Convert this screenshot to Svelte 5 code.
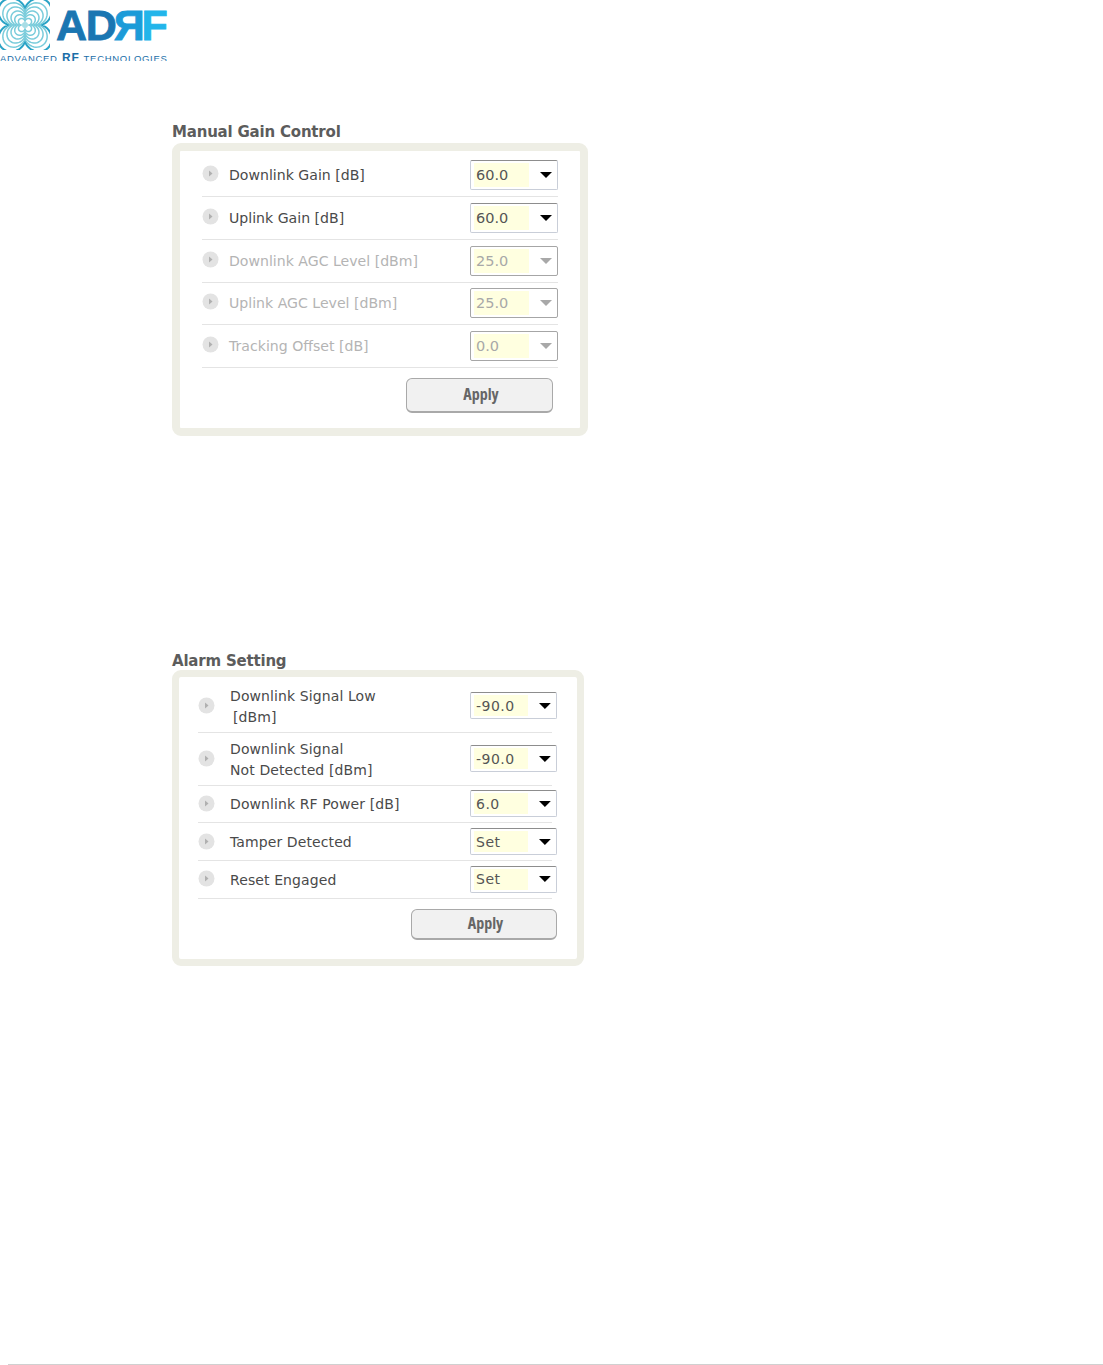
<script>
  const gainRows = [
    { label: 'Downlink Gain [dB]', value: '60.0' },
    { label: 'Uplink Gain [dB]', value: '60.0' },
    { label: 'Downlink AGC Level [dBm]', value: '25.0', disabled: true },
    { label: 'Uplink AGC Level [dBm]', value: '25.0', disabled: true },
    { label: 'Tracking Offset [dB]', value: '0.0', disabled: true }
  ];

  const alarmRows = [
    { lines: ['Downlink Signal Low', '[dBm]'], value: '-90.0', tall: true, indent: true },
    { lines: ['Downlink Signal', 'Not Detected [dBm]'], value: '-90.0', tall: true },
    { lines: ['Downlink RF Power [dB]'], value: '6.0' },
    { lines: ['Tamper Detected'], value: 'Set' },
    { lines: ['Reset Engaged'], value: 'Set' }
  ];

  // four-lobed rings of the logo mark
  function ring(size) {
    const points = [];
    for (let i = 0; i < 96; i++) {
      const t = (i / 96) * Math.PI * 2;
      const r = size * (0.5 + 0.5 * Math.pow(Math.abs(Math.sin(2 * t)), 0.8));
      points.push(`${(25 + r * Math.cos(t)).toFixed(2)},${(25 + r * Math.sin(t)).toFixed(2)}`);
    }
    return points.join(' ');
  }

  const rings = [32.5, 27, 22, 17, 12.5, 8];
</script>

{#snippet bullet()}
  <svg class="bullet" width="17" height="17" viewBox="0 0 17 17" aria-hidden="true">
    <circle cx="8.5" cy="8.5" r="8" fill="#e3e3e3" />
    <path d="M7 5.5 L10.5 8.5 L7 11.5 Z" fill="#b0b0b0" />
  </svg>
{/snippet}

{#snippet select(value, disabled)}
  <div class="select" class:disabled>
    <span class="value">{value}</span>
    <svg class="arrow" width="12" height="6" viewBox="0 0 12 6" aria-hidden="true">
      <path d="M0 0 H12 L6 6 Z" />
    </svg>
  </div>
{/snippet}

<div class="page">
  <header class="logo">
    <svg class="mark" width="50" height="50" viewBox="0 0 50 50" aria-hidden="true">
      {#each rings as size, i}
        <polygon
          points={ring(size)}
          fill="none"
          stroke={i === 0 ? '#2aa3c6' : '#7accdb'}
          stroke-width={i === 0 ? 2 : 1.5}
        />
      {/each}
      <circle cx="25" cy="25" r="3" fill="#a9dde6" />
    </svg>
    <div class="wordmark">
      <span class="ad">AD</span><span class="r">R</span><span class="f">F</span>
    </div>
    <div class="tagline">ADVANCED <b>RF</b> TECHNOLOGIES</div>
  </header>

  <section class="gain">
    <h2>Manual Gain Control</h2>
    <div class="panel">
      {#each gainRows as row}
        <div class="row" class:disabled={row.disabled}>
          {@render bullet()}
          <span class="label">{row.label}</span>
          {@render select(row.value, row.disabled)}
        </div>
      {/each}
      <div class="actions">
        <button class="apply">Apply</button>
      </div>
    </div>
  </section>

  <section class="alarm">
    <h2>Alarm Setting</h2>
    <div class="panel">
      {#each alarmRows as row}
        <div class="row" class:tall={row.tall}>
          {@render bullet()}
          <span class="label">
            {#each row.lines as line, i}
              <span class="line" class:indent={row.indent && i === 1}>{line}</span>
            {/each}
          </span>
          {@render select(row.value, false)}
        </div>
      {/each}
      <div class="actions">
        <button class="apply">Apply</button>
      </div>
    </div>
  </section>

  <footer class="rule"></footer>
</div>

<style>
  :global(body) {
    margin: 0;
    background: #fff;
  }

  .page {
    position: relative;
    height: 1365px;
    overflow: hidden;
    font-family: "DejaVu Sans", Verdana, sans-serif;
    color: #4a4a4a;
  }

  .logo {
    position: relative;
    height: 61px;
    width: 170px;
    overflow: hidden;
  }

  .mark {
    display: block;
  }

  .wordmark {
    position: absolute;
    left: 56px;
    top: 0;
    font-family: "Liberation Sans", Arial, sans-serif;
    font-weight: 700;
    font-size: 43px;
    line-height: 50px;
    letter-spacing: -1.2px;
    white-space: nowrap;
    -webkit-text-stroke: 0.8px currentColor;
  }

  .ad {
    color: #1a76b2;
  }

  .r {
    display: inline-block;
    transform: scaleX(-1);
    color: #1c9bd8;
    margin-left: -1px;
  }

  .f {
    color: #22b5ea;
    margin-left: -3px;
  }

  .tagline {
    position: absolute;
    left: 0;
    top: 52px;
    width: 170px;
    font-family: "Liberation Sans", Arial, sans-serif;
    font-size: 9.5px;
    line-height: 12px;
    letter-spacing: 0.7px;
    color: #1a6ea8;
    white-space: nowrap;
  }

  .tagline b {
    font-size: 12px;
    line-height: 12px;
    margin: 0 1px;
  }

  section {
    margin-left: 172px;
  }

  .gain {
    width: 416px;
    margin-top: 60px;
  }

  .alarm {
    width: 412px;
    margin-top: 214px;
  }

  h2 {
    margin: 0;
    height: 22px;
    font-size: 15px;
    line-height: 22px;
    font-weight: 700;
    color: #5c5c5c;
    white-space: nowrap;
    letter-spacing: -0.2px;
  }

  .panel {
    box-sizing: border-box;
    background: #fff;
    border: 8px solid #eeeee5;
    border-radius: 9px;
  }

  .gain .panel {
    height: 293px;
    padding: 3.25px 22px 0;
  }

  .alarm .panel {
    height: 296px;
    padding: 3px 25px 0 19px;
    border-width: 7px;
    margin-top: -2px;
  }

  .row {
    display: flex;
    align-items: center;
    box-sizing: border-box;
    height: 42.75px;
    border-bottom: 1px solid #e4e4e4;
    font-size: 14.1px;
  }

  .alarm .row {
    height: 37.75px;
    font-size: 14px;
    letter-spacing: 0.1px;
  }

  .alarm .row.tall {
    height: 52.75px;
  }

  .row.disabled {
    color: #b4b4b4;
  }

  .bullet {
    flex: none;
    margin-right: 10px;
    margin-top: -3px;
  }

  .alarm .bullet {
    margin-right: 15px;
    margin-top: -1px;
  }

  .alarm .row.tall .bullet {
    margin-top: 0;
  }

  .label {
    flex: 1;
    white-space: nowrap;
  }

  .alarm .label {
    margin-top: 2px;
  }

  .alarm .row.tall .label {
    margin-top: 3px;
  }

  .line {
    display: block;
    line-height: 21px;
  }

  .line.indent {
    padding-left: 3px;
  }

  .select {
    flex: none;
    display: flex;
    align-items: center;
    box-sizing: border-box;
    width: 88px;
    height: 30px;
    padding: 2px 5px 2px 3px;
    background: #fff;
    border: 1px solid #c9ced8;
    border-top-color: #8d8d8d;
    border-radius: 2px;
    font-size: 14.5px;
    color: #555;
  }

  .alarm .select {
    width: 87px;
    height: 27px;
    margin-right: -5px;
    font-size: 14px;
    letter-spacing: 0.5px;
  }

  .select.disabled {
    border-color: #a6a6a6;
    color: #a8a8a8;
  }

  .value {
    align-self: stretch;
    display: flex;
    align-items: center;
    box-sizing: border-box;
    width: 55px;
    padding-left: 2px;
    background: #ffffe0;
  }

  .arrow {
    margin-left: 11px;
    fill: #000;
  }

  .select.disabled .arrow {
    fill: #a8a8a8;
  }

  .actions {
    display: flex;
    justify-content: flex-end;
    padding-top: 10px;
    padding-right: 5px;
  }

  .alarm .actions {
    padding-right: 0;
    margin-right: -5px;
  }

  .apply {
    box-sizing: border-box;
    width: 147px;
    height: 35px;
    padding: 0 0 2px 3px;
    background: #f1f1f1;
    border: 1px solid #a9a9a9;
    border-bottom-width: 2px;
    border-radius: 6px;
    font-family: "Open Sans", "DejaVu Sans", sans-serif;
    font-size: 16px;
    font-weight: 700;
    font-stretch: condensed;
    color: #666;
  }

  .alarm .apply {
    height: 31px;
    width: 146px;
  }

  .rule {
    position: absolute;
    left: 8px;
    right: 0;
    top: 1364px;
    height: 1px;
    background: #d0d0d0;
  }
</style>
